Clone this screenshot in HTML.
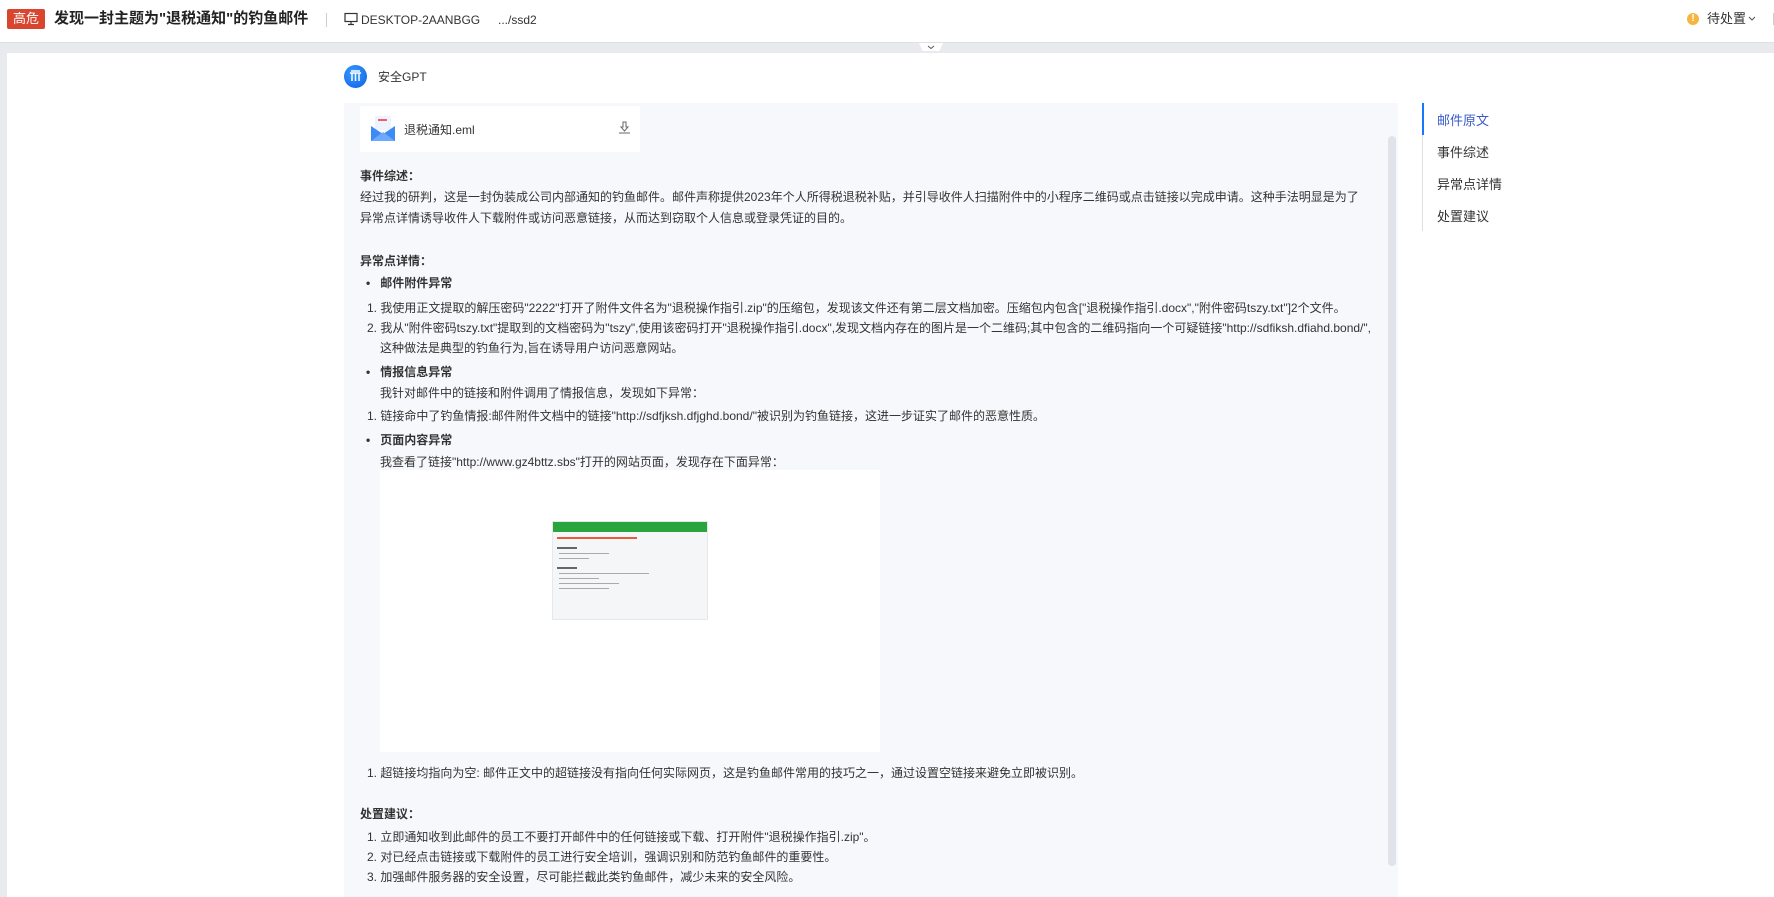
<!DOCTYPE html>
<html><head><meta charset="utf-8"><style>
*{margin:0;padding:0;box-sizing:border-box}
body{width:1774px;height:897px;overflow:hidden;background:#e8eaed;font-family:"Liberation Sans","Noto Sans CJK SC",sans-serif;color:#333;font-size:13px;position:relative}
.hdr{position:absolute;left:0;top:0;width:1774px;height:43px;background:#fff;border-bottom:1px solid #dde0e4}
.abs{position:absolute;white-space:nowrap}
.panel{position:absolute;left:7px;top:53px;width:1767px;height:844px;background:#fff}
.box{position:absolute;left:344px;top:103px;width:1054px;height:794px;background:#f7f8fb}
.t{position:absolute;left:360px;white-space:nowrap;font-size:12px;line-height:20px;color:#333}
.b{font-weight:bold}
.nav{position:absolute;left:1437px;font-size:13px;color:#333}
</style></head><body>
<div class="hdr">
 <div class="abs" style="left:7px;top:9px;width:38px;height:20px;background:#d9452e;border-radius:2px;color:#fff;font-size:13px;line-height:20px;text-align:center">高危</div>
 <div class="abs" style="left:54px;top:8px;font-size:15px;font-weight:bold;color:#222;line-height:22px">发现一封主题为"退税通知"的钓鱼邮件</div>
 <div class="abs" style="left:326px;top:13px;width:1px;height:14px;background:#ccc"></div>
 <svg class="abs" style="left:344px;top:12px" width="14" height="14" viewBox="0 0 14 14"><rect x="1" y="1.5" width="12" height="8" fill="none" stroke="#333" stroke-width="1.2"/><path d="M7 9.5v3M4 12.5h6" stroke="#333" stroke-width="1.2"/></svg>
 <div class="abs" style="left:361px;top:11px;font-size:12px;color:#333;line-height:18px">DESKTOP-2AANBGG</div>
 <div class="abs" style="left:498px;top:11px;font-size:12px;color:#333;line-height:18px">.../ssd2</div>
 <div class="abs" style="left:1687px;top:13px;width:12px;height:12px;border-radius:50%;background:#f5b53f;color:#fff;font-size:10px;line-height:12px;text-align:center;font-weight:bold">!</div>
 <div class="abs" style="left:1707px;top:10px;font-size:13px;line-height:18px">待处置</div>
 <svg class="abs" style="left:1748px;top:16px" width="8" height="6"><path d="M1 1l3 3 3-3" fill="none" stroke="#555"/></svg>
 <div class="abs" style="left:1773px;top:13px;width:1px;height:12px;background:#ccc"></div>
</div>
<div class="panel"></div>
<div class="abs" style="left:919px;top:43px;width:24px;height:8px;background:#fff;clip-path:polygon(0 0,100% 0,85% 100%,15% 100%)"></div>
<svg class="abs" style="left:927px;top:45px" width="8" height="5"><path d="M1 1l3 2.5 3-2.5" fill="none" stroke="#555"/></svg>
<div class="abs" style="left:344px;top:65px;width:23px;height:23px;border-radius:50%;background:radial-gradient(circle at 40% 35%,#3a9bff,#0a5fe0)"><svg width="23" height="23"><path d="M6 8h11M8 8v8M11.5 8v8M15 8v8M7 6h9" stroke="#fff" stroke-width="1.5" fill="none"/></svg></div>
<div class="abs" style="left:378px;top:69px;font-size:12px;line-height:16px">安全GPT</div>
<div class="box"></div>
<div class="abs" style="left:360px;top:106px;width:280px;height:46px;background:#fff"></div>
<svg class="abs" style="left:370px;top:115px" width="26" height="28" viewBox="0 0 26 28"><rect x="5" y="1" width="16" height="14" fill="#eef3ff"/><rect x="8" y="4" width="9" height="2" fill="#f06060"/><path d="M1 11l12 8 12-8v15H1z" fill="#3d8bf5"/><path d="M1 26l12-9 12 9" fill="#6fa8ff"/></svg>
<div class="abs" style="left:404px;top:121px;font-size:12px">退税通知.eml</div>
<svg class="abs" style="left:618px;top:121px" width="13" height="13" viewBox="0 0 13 13"><path d="M5 1h3v5h2l-3.5 4L3 6h2z" fill="none" stroke="#666"/><path d="M1 12h11" stroke="#666"/></svg>
<div class="abs" style="left:1388px;top:136px;width:8px;height:730px;border-radius:4px;background:#e1e3ea"></div>

<div class="t b" style="top:166px">事件综述：</div>
<div class="t" style="top:187px">经过我的研判，这是一封伪装成公司内部通知的钓鱼邮件。邮件声称提供2023年个人所得税退税补贴，并引导收件人扫描附件中的小程序二维码或点击链接以完成申请。这种手法明显是为了</div>
<div class="t" style="top:208px">异常点详情诱导收件人下载附件或访问恶意链接，从而达到窃取个人信息或登录凭证的目的。</div>
<div class="t b" style="top:251px">异常点详情：</div>
<div class="t b" style="top:273px;left:366px">•&nbsp;&nbsp;&nbsp;邮件附件异常</div>
<div class="t" style="top:298px;left:367px">1. 我使用正文提取的解压密码"2222"打开了附件文件名为"退税操作指引.zip"的压缩包，发现该文件还有第二层文档加密。压缩包内包含["退税操作指引.docx","附件密码tszy.txt"]2个文件。</div>
<div class="t" style="top:318px;left:367px">2. 我从"附件密码tszy.txt"提取到的文档密码为"tszy",使用该密码打开"退税操作指引.docx",发现文档内存在的图片是一个二维码;其中包含的二维码指向一个可疑链接"http://sdfiksh.dfiahd.bond/",</div>
<div class="t" style="top:338px;left:380px">这种做法是典型的钓鱼行为,旨在诱导用户访问恶意网站。</div>
<div class="t b" style="top:362px;left:366px">•&nbsp;&nbsp;&nbsp;情报信息异常</div>
<div class="t" style="top:383px;left:380px">我针对邮件中的链接和附件调用了情报信息，发现如下异常：</div>
<div class="t" style="top:406px;left:367px">1. 链接命中了钓鱼情报:邮件附件文档中的链接"http://sdfjksh.dfjghd.bond/"被识别为钓鱼链接，这进一步证实了邮件的恶意性质。</div>
<div class="t b" style="top:430px;left:366px">•&nbsp;&nbsp;&nbsp;页面内容异常</div>
<div class="t" style="top:452px;left:380px">我查看了链接"http://www.gz4bttz.sbs"打开的网站页面，发现存在下面异常：</div>
<div class="abs" style="left:380px;top:470px;width:500px;height:282px;background:#fff"></div>
<div class="abs" style="left:552px;top:521px;width:156px;height:99px;background:#f4f6f8;border:1px solid #e6e8ea">
 <div style="height:10px;background:#2aa53d"></div>
 <div style="margin:5px 4px;height:2px;width:80px;background:#e85a3a"></div>
 <div style="margin:8px 4px 0;height:2px;width:20px;background:#666"></div>
 <div style="margin:4px 6px 0;height:1px;width:50px;background:#aaa"></div>
 <div style="margin:4px 6px 0;height:1px;width:30px;background:#aaa"></div>
 <div style="margin:8px 4px 0;height:2px;width:20px;background:#666"></div>
 <div style="margin:4px 6px 0;height:1px;width:90px;background:#aaa"></div>
 <div style="margin:4px 6px 0;height:1px;width:40px;background:#aaa"></div>
 <div style="margin:4px 6px 0;height:1px;width:60px;background:#aaa"></div>
 <div style="margin:4px 6px 0;height:1px;width:50px;background:#aaa"></div>
</div>
<div class="t" style="top:763px;left:367px">1. 超链接均指向为空: 邮件正文中的超链接没有指向任何实际网页，这是钓鱼邮件常用的技巧之一，通过设置空链接来避免立即被识别。</div>
<div class="t b" style="top:804px">处置建议：</div>
<div class="t" style="top:827px;left:367px">1. 立即通知收到此邮件的员工不要打开邮件中的任何链接或下载、打开附件"退税操作指引.zip"。</div>
<div class="t" style="top:847px;left:367px">2. 对已经点击链接或下载附件的员工进行安全培训，强调识别和防范钓鱼邮件的重要性。</div>
<div class="t" style="top:867px;left:367px">3. 加强邮件服务器的安全设置，尽可能拦截此类钓鱼邮件，减少未来的安全风险。</div>

<div class="abs" style="left:1422px;top:103px;width:1px;height:128px;background:#dcdfe6"></div>
<div class="abs" style="left:1422px;top:103px;width:2px;height:32px;background:#1677ff"></div>
<div class="nav" style="top:110px;color:#3a5bc7">邮件原文</div>
<div class="nav" style="top:142px">事件综述</div>
<div class="nav" style="top:174px">异常点详情</div>
<div class="nav" style="top:206px">处置建议</div>
</body></html>
